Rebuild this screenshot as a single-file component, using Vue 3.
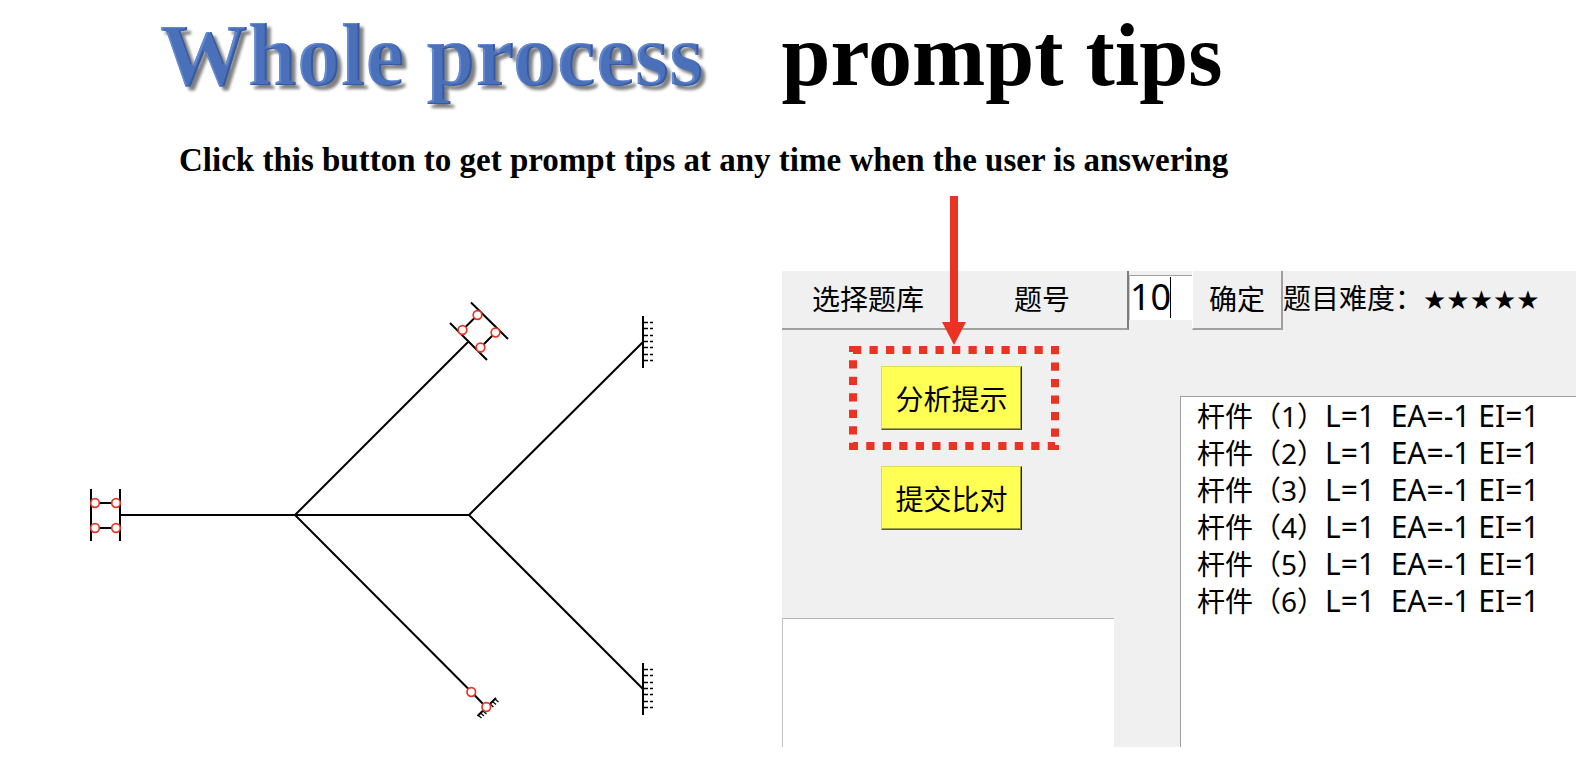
<script setup>
import { ref } from 'vue'

const questionNumber = ref('10')
const members = [1, 2, 3, 4, 5, 6]
const supports = [
  { x: 643, y: 342 },
  { x: 643, y: 689 },
]
const ticks = [-19, -13, -6, 0, 6, 13, 19]
</script>

<template>
  <div class="page">
    <svg class="defs" aria-hidden="true">
      <filter id="bevel" x="-5%" y="-10%" width="110%" height="130%" color-interpolation-filters="sRGB">
        <feOffset in="SourceAlpha" dx="-2" dy="-1" result="up" />
        <feComposite in="SourceAlpha" in2="up" operator="out" result="darkEdge" />
        <feFlood flood-color="#2f5096" flood-opacity="0.7" />
        <feComposite in2="darkEdge" operator="in" />
        <feGaussianBlur stdDeviation="0.6" />
        <feComposite in2="SourceAlpha" operator="in" result="dark" />
        <feOffset in="SourceAlpha" dx="2" dy="1" result="down" />
        <feComposite in="SourceAlpha" in2="down" operator="out" result="lightEdge" />
        <feFlood flood-color="#6d97e0" flood-opacity="0.7" />
        <feComposite in2="lightEdge" operator="in" />
        <feGaussianBlur stdDeviation="0.6" />
        <feComposite in2="SourceAlpha" operator="in" result="light" />
        <feGaussianBlur in="SourceAlpha" stdDeviation="1.8" />
        <feOffset dx="4" dy="4" />
        <feComponentTransfer result="shadow">
          <feFuncA type="linear" slope="0.5" />
        </feComponentTransfer>
        <feMerge>
          <feMergeNode in="shadow" />
          <feMergeNode in="SourceGraphic" />
          <feMergeNode in="light" />
          <feMergeNode in="dark" />
        </feMerge>
      </filter>
    </svg>

    <header class="heading">
      <h1><span class="accent">Whole process</span><span>prompt tips</span></h1>
      <p>Click this button to get prompt tips at any time when the user is answering</p>
    </header>

    <main class="stage">
      <svg class="structure" viewBox="0 271 782 476" role="img" aria-label="Frame structure">
        <g class="member">
          <path d="M120 515H469" />
          <path d="M468.5 341.5L295 515L471 691.5L486 707" />
          <path d="M643 342L469 515L643 689" />
        </g>
        <g class="member">
          <path d="M91 489V541M120 489V541M95 503H116M95 528H116" />
          <path d="M450 323L487 360M471 302.500L508 339M462.500 330L477.500 315M480.500 347.500L495.500 332.500" />
        </g>
        <g class="pin">
          <circle cx="95" cy="503" r="4.300" />
          <circle cx="116" cy="503" r="4.300" />
          <circle cx="95" cy="528" r="4.300" />
          <circle cx="116" cy="528" r="4.300" />
          <circle cx="462.500" cy="330" r="4.300" />
          <circle cx="477.500" cy="315" r="4.300" />
          <circle cx="480.500" cy="347.500" r="4.300" />
          <circle cx="495.500" cy="332.500" r="4.300" />
        </g>
        <g v-for="s in supports" :key="s.y">
          <path class="member" :d="`M${s.x} ${s.y - 26}v52`" />
          <path v-for="t in ticks" :key="t" class="hatch" :d="`M${s.x + 1} ${s.y + t - 0.5}h9`" />
        </g>
        <path class="member" d="M477.500 716L496 698" />
        <path class="ground" d="M478 715l3.500 3M480.500 713l3.500 3M483 711l3.500 3M490 704l3.500 3M492.500 701.500l3.500 3M495 699l3.500 3" />
        <g class="pin">
          <circle cx="471.300" cy="692" r="4.300" />
          <circle cx="486.300" cy="707" r="4.300" />
        </g>
      </svg>

      <section class="panel">
        <div class="toolbar">
          <div class="picker">
            <button type="button">选择题库</button>
            <label for="number">题号</label>
          </div>
          <div class="field">
            <input id="number" v-model="questionNumber" type="text" />
            <i class="caret"></i>
          </div>
          <button type="button" class="confirm">确定</button>
          <span class="level">题目难度：<span class="stars">★★★★★</span></span>
        </div>

        <div class="body">
          <div class="side">
            <div class="highlight">
              <svg class="outline" viewBox="0 0 210 104" aria-hidden="true">
                <rect x="4" y="4" width="202" height="96" />
              </svg>
              <svg class="arrow" viewBox="0 0 24 149" aria-hidden="true">
                <path d="M8 0H16V126H24L12 149L0 126H8Z" />
              </svg>
              <button type="button" class="action">分析提示</button>
            </div>
            <button type="button" class="action submit">提交比对</button>
            <div class="output"></div>
          </div>
          <ul class="members">
            <li v-for="n in members" :key="n">杆件（{{ n }}）<span class="values">L=1&nbsp; EA=-1 EI=1</span></li>
          </ul>
        </div>
      </section>
    </main>
  </div>
</template>

<style>
body {
  margin: 0;
  background: #fff;
}
</style>

<style scoped>
.page {
  min-height: 100vh;
  box-sizing: border-box;
  color: #000;
  font-family: "Noto Sans", "Noto Sans CJK SC", sans-serif;
  font-size: 28px;
}
.defs {
  position: absolute;
  width: 0;
  height: 0;
}
.heading {
  height: 271px;
  box-sizing: border-box;
  padding: 8px 0 0 160px;
  font-family: "Liberation Serif", serif;
  font-weight: 700;
  white-space: nowrap;
}
h1 {
  display: flex;
  gap: 78px;
  margin: 0;
  font-size: 88px;
  line-height: 96px;
}
.accent {
  color: #4a70b9;
  filter: url(#bevel);
}
p {
  margin: 36px 0 0 19px;
  font-size: 33px;
  line-height: 40px;
}
.stage {
  display: grid;
  grid-template-columns: 782fr 794fr;
  padding-right: 18px;
  align-items: start;
}
.structure {
  width: 100%;
}
.member {
  fill: none;
  stroke: #000;
  stroke-width: 2;
}
.pin {
  fill: #fff;
  stroke: #eb3324;
  stroke-width: 1.7;
}
.hatch {
  stroke: #000;
  stroke-width: 1.4;
  stroke-dasharray: 4 2;
}
.ground {
  fill: none;
  stroke: #000;
  stroke-width: 1.2;
}
button,
input {
  margin: 0;
  padding: 0;
  border: 0;
  border-radius: 0;
  background: none;
  color: inherit;
  font: inherit;
}
.panel {
  display: flex;
  flex-direction: column;
  background: #f0f0f0;
}
.toolbar {
  display: flex;
  height: 59px;
  white-space: nowrap;
}
.picker {
  display: flex;
  align-items: center;
  gap: 90px;
  width: 347px;
  box-sizing: border-box;
  padding: 0 0 4px 30px;
  border-right: 2px solid #7d7d7d;
  border-bottom: 2px solid #a0a0a0;
}
.field {
  position: relative;
  width: 63px;
  height: 45px;
  margin-top: 4px;
  box-sizing: border-box;
  border-top: 1px solid #a0a0a0;
  border-left: 1px solid #c8c8c8;
  background: #fff;
}
.field input {
  display: block;
  width: 100%;
  height: 42px;
  font-size: 36px;
  line-height: 42px;
}
.caret {
  position: absolute;
  top: 1px;
  left: 40px;
  width: 1px;
  height: 41px;
  background: #000;
}
.confirm {
  width: 91px;
  padding-bottom: 4px;
  border-left: 1px solid #fff;
  border-right: 2px solid #a0a0a0;
  border-bottom: 2px solid #a0a0a0;
}
.level {
  line-height: 54px;
}
.stars {
  font-family: "DejaVu Sans", sans-serif;
  font-size: 26px;
}
.body {
  display: flex;
}
.side {
  display: flex;
  flex-direction: column;
  align-items: flex-start;
  width: 332px;
  height: 417px;
  margin-right: 66px;
  padding-top: 16px;
  box-sizing: border-box;
}
.highlight {
  position: relative;
  display: flex;
  align-items: center;
  width: 210px;
  height: 104px;
  flex: none;
  box-sizing: border-box;
  margin-left: 67px;
  padding-left: 32px;
}
.outline {
  position: absolute;
  inset: 0;
  fill: none;
  stroke: #eb3324;
  stroke-width: 8;
  stroke-dasharray: 8.25;
  pointer-events: none;
}
.arrow {
  position: absolute;
  left: 93px;
  bottom: 105px;
  width: 24px;
  fill: #eb3324;
  pointer-events: none;
}
.action {
  width: 141px;
  height: 64px;
  flex: none;
  box-sizing: border-box;
  border-top: 1px solid #dddd55;
  border-left: 1px solid #dddd55;
  border-right: 1px solid #222;
  border-bottom: 1px solid #555;
  background: #ffff54;
  box-shadow: inset -1px -1px 0 #a0a03c;
}
.submit {
  margin: 16px 0 0 99px;
}
.output {
  width: 100%;
  flex: 1;
  margin-top: 88px;
  box-sizing: border-box;
  border-top: 1px solid #b4b4b4;
  border-left: 1px solid #c4c4c4;
  background: #fff;
}
.members {
  flex: 1;
  margin: 66px 0 0;
  padding: 0 0 0 16px;
  border-top: 1px solid #a0a0a0;
  border-left: 1px solid #a0a0a0;
  background: #fff;
  list-style: none;
  line-height: 37px;
  white-space: nowrap;
}
.members li {
  height: 37px;
}
.values {
  font-size: 30px;
}
</style>
